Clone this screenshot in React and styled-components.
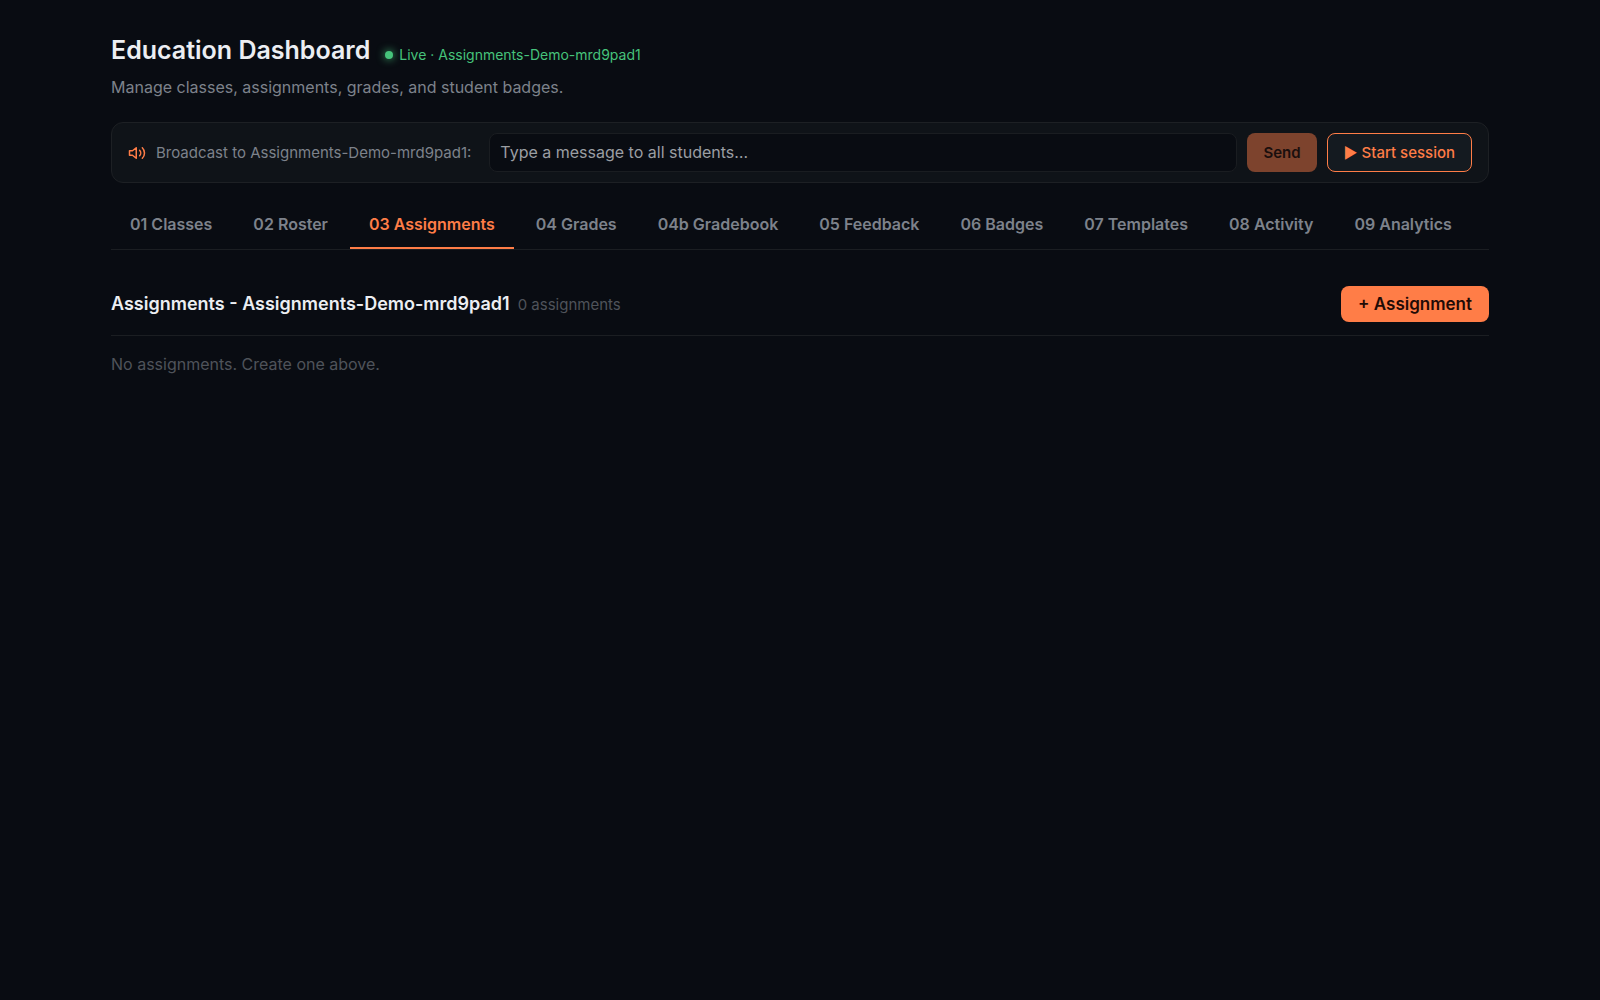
import React, { useState } from "react";
import styled, { createGlobalStyle } from "styled-components";

const GlobalStyle = createGlobalStyle`
  *, *::before, *::after { box-sizing: border-box; }
  body {
    margin: 0;
    background: #090c12;
    color: #eceef2;
    font-family: Inter, "Liberation Sans", sans-serif;
    font-size: 16px;
    line-height: 24px;
  }
  button, input { font: inherit; }
`;

const Page = styled.main`
  max-width: 1442px;
  margin: 0 auto;
  padding: 32px;
`;

const TitleRow = styled.header`
  display: flex;
  align-items: baseline;
  gap: 15px;
`;

const Title = styled.h1`
  margin: 0;
  font-size: 25px;
  line-height: 36px;
  font-weight: 600;
`;

const Live = styled.span`
  display: flex;
  align-items: center;
  gap: 6px;
  color: #46c37b;
  font-size: 14px;
`;

const Dot = styled.span`
  width: 8px;
  height: 8px;
  border-radius: 50%;
  background: currentColor;
  box-shadow: 0 0 8px currentColor;
`;

const Subtitle = styled.p`
  margin: 7px 0 23px;
  color: #7d828b;
`;

const Broadcast = styled.form`
  display: flex;
  align-items: center;
  gap: 10px;
  padding: 10px 16px;
  background: #0f1318;
  border: 1px solid #1d2024;
  border-radius: 12px;
`;

const BroadcastLabel = styled.label`
  display: flex;
  align-items: center;
  gap: 10px;
  margin-right: 8px;
  color: #7d828b;
  font-size: 15px;
  white-space: nowrap;

  svg { color: #ff7d47; }
`;

const MessageInput = styled.input`
  flex: 1;
  min-width: 0;
  height: 39px;
  padding: 0 10px 2px;
  background: #090c12;
  border: 1px solid #1a1d21;
  border-radius: 8px;
  color: #eceef2;
  outline: none;

  &::placeholder { color: #9b9ea3; opacity: 1; }
`;

const Button = styled.button`
  height: ${(p) => (p.$compact ? "36px" : "39px")};
  padding: 0 ${(p) => (p.$compact ? "17px" : "16px")};
  background: ${(p) => (p.$outline ? "#141a20" : "#ff7d47")};
  border: ${(p) => (p.$outline ? "1px solid #ff7d47" : "0")};
  border-radius: 8px;
  color: ${(p) => (p.$outline ? "#ff7d47" : "#1f0b06")};
  font-size: ${(p) => (p.$compact ? "17px" : "15px")};
  font-weight: ${(p) => (p.$outline ? 500 : 600)};
  white-space: nowrap;
  cursor: pointer;

  &:disabled {
    background: #7d432d;
    color: #1a0f0d;
    cursor: default;
  }
`;

const Tabs = styled.nav`
  display: flex;
  gap: 3px;
  margin-top: 17px;
  border-bottom: 1px solid #1b1e22;
`;

const Tab = styled.button`
  padding: 12px 19px 11px;
  background: none;
  border: 0;
  border-bottom: 2px solid ${(p) => (p.$active ? "#ff7d47" : "transparent")};
  color: ${(p) => (p.$active ? "#ff7d47" : "#7d828b")};
  font-weight: 600;
  white-space: nowrap;
  cursor: pointer;
`;

const SectionHead = styled.div`
  display: flex;
  align-items: center;
  justify-content: space-between;
  margin-top: 36px;
  padding-bottom: 13px;
  border-bottom: 1px solid #1b1e22;
`;

const Heading = styled.div`
  display: flex;
  align-items: baseline;
  gap: 8px;
`;

const SectionTitle = styled.h2`
  margin: 0;
  font-size: 18px;
  line-height: 24px;
  font-weight: 600;
`;

const Count = styled.span`
  color: #4f535a;
  font-size: 15px;
`;

const Empty = styled.p`
  margin: 16px 0 0;
  color: #4f535a;
`;

function SpeakerIcon() {
  return (
    <svg
      width="18"
      height="18"
      viewBox="0 0 24 24"
      fill="none"
      stroke="currentColor"
      strokeWidth="2"
      strokeLinecap="round"
      strokeLinejoin="round"
      aria-hidden="true"
    >
      <polygon points="11 5 6 9 2 9 2 15 6 15 11 19 11 5" />
      <path d="M15.54 8.46a5 5 0 0 1 0 7.07" />
      <path d="M19.07 4.93a10 10 0 0 1 0 14.14" />
    </svg>
  );
}

const className = "Assignments-Demo-mrd9pad1";
const tabs = [
  "01 Classes",
  "02 Roster",
  "03 Assignments",
  "04 Grades",
  "04b Gradebook",
  "05 Feedback",
  "06 Badges",
  "07 Templates",
  "08 Activity",
  "09 Analytics",
];

export default function App() {
  const [active, setActive] = useState("03 Assignments");
  const [message, setMessage] = useState("");

  return (
    <>
      <GlobalStyle />
      <Page>
        <TitleRow>
          <Title>Education Dashboard</Title>
          <Live>
            <Dot />
            Live · {className}
          </Live>
        </TitleRow>
        <Subtitle>Manage classes, assignments, grades, and student badges.</Subtitle>

        <Broadcast onSubmit={(e) => e.preventDefault()}>
          <BroadcastLabel htmlFor="broadcast">
            <SpeakerIcon />
            Broadcast to {className}:
          </BroadcastLabel>
          <MessageInput
            id="broadcast"
            placeholder="Type a message to all students…"
            value={message}
            onChange={(e) => setMessage(e.target.value)}
          />
          <Button type="submit" disabled={!message}>Send</Button>
          <Button type="button" $outline>▶ Start session</Button>
        </Broadcast>

        <Tabs>
          {tabs.map((tab) => (
            <Tab key={tab} type="button" $active={tab === active} onClick={() => setActive(tab)}>
              {tab}
            </Tab>
          ))}
        </Tabs>

        <SectionHead>
          <Heading>
            <SectionTitle>Assignments - {className}</SectionTitle>
            <Count>0 assignments</Count>
          </Heading>
          <Button type="button" $compact>+ Assignment</Button>
        </SectionHead>
        <Empty>No assignments. Create one above.</Empty>
      </Page>
    </>
  );
}
